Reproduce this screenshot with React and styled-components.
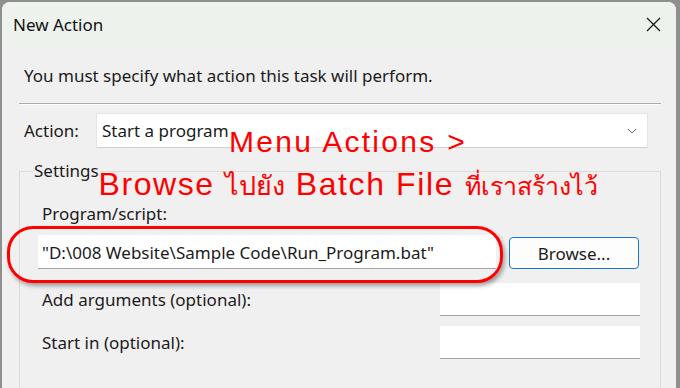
import React from 'react';
import styled, { createGlobalStyle } from 'styled-components';

const GlobalStyle = createGlobalStyle`
  html, body {
    margin: 0;
    background: #8f8f8f;
    overflow: hidden;
  }
`;

const Window = styled.div`
  position: relative;
  margin: 2px 4px 0 2px;
  height: 386px;
  border-radius: 8px 8px 0 0;
  background: #f0f0f0;
  overflow: hidden;
  font-family: 'Noto Sans', 'Open Sans', sans-serif;
  font-size: 17px;
  color: #1b1b1b;
`;

const TitleBar = styled.div`
  height: 44px;
  display: flex;
  align-items: center;
  justify-content: space-between;
  padding: 0 15px 0 11px;
  background: #eef2ec;
`;

const Title = styled.span`
  font-size: 17px;
  color: #111;
`;

const Body = styled.div`
  padding: 20px 15px 0 17px;
`;

const Intro = styled.div`
  line-height: 20px;
  padding-left: 5px;
`;

const Separator = styled.div`
  margin-top: 17px;
  height: 1px;
  background: #a9a9a9;
  border-bottom: 1px solid #fcfcfc;
`;

const ActionRow = styled.div`
  display: flex;
  align-items: center;
  margin-top: 8px;
  padding-right: 13px;
`;

const ActionLabel = styled.span`
  width: 77px;
  padding-left: 5px;
  box-sizing: border-box;
`;

const Combo = styled.div`
  flex: 1;
  height: 33px;
  display: flex;
  align-items: center;
  justify-content: space-between;
  padding: 0 10px 0 5px;
  background: #fff;
  border: 1px solid #e4e4e4;
  border-bottom-color: #cfcfcf;
`;

const Group = styled.fieldset`
  margin: 13px 0 0 0;
  padding: 0 20px 60px 18px;
  border: 1px solid #dcdcdc;
  border-radius: 0;
`;

const Legend = styled.legend`
  margin-left: -5px;
  padding: 0 1px;
  line-height: 20px;
`;

const FieldLabel = styled.div`
  line-height: 20px;
  padding-left: 4px;
  margin-top: ${p => p.$top}px;
`;

const PathRow = styled.div`
  display: flex;
  align-items: center;
  gap: 13px;
  margin-top: 10px;
`;

const TextBox = styled.div`
  box-sizing: border-box;
  height: ${p => p.$h}px;
  width: ${p => p.$w}px;
  display: flex;
  align-items: center;
  padding: 2px 4px 0;
  background: #fff;
  border-bottom: 1px solid #a3a3a3;
  white-space: nowrap;
  overflow: hidden;
`;

const Button = styled.button`
  width: 130px;
  height: 32px;
  margin-top: 3px;
  font: inherit;
  color: #1b1b1b;
  background: #fdfdfd;
  border: 1px solid #1a75cc;
  border-radius: 4px;
`;

const OptionRow = styled.div`
  display: flex;
  align-items: center;
  justify-content: space-between;
  margin-top: ${p => p.$top}px;
  padding-left: 4px;
`;

const Note = styled.div`
  position: absolute;
  left: 0;
  top: 119px;
  width: 692px;
  text-align: center;
  color: #ff0000;
  font-family: 'Liberation Sans', Arial, sans-serif;
  pointer-events: none;
`;

const NoteLine = styled.div`
  font-size: ${p => p.$size}px;
  letter-spacing: ${p => p.$spacing}px;
  line-height: 42px;
  white-space: nowrap;
`;

const ThaiPart = styled.span`
  letter-spacing: 0;
  font-size: ${p => p.$size}px;
`;

const Highlight = styled.div`
  position: absolute;
  left: 5px;
  top: 224px;
  width: 490px;
  height: 51px;
  border: 3px solid #f00;
  border-radius: 26px;
  box-shadow: 2px 3px 4px rgba(0, 0, 0, 0.35);
  pointer-events: none;
`;

const CloseIcon = () => (
  <svg width="15" height="15" viewBox="0 0 15 15">
    <path d="M1 1 L14 14 M14 1 L1 14" stroke="#1a1a1a" strokeWidth="1.3" fill="none" />
  </svg>
);

const Chevron = () => (
  <svg width="10" height="6" viewBox="0 0 10 6">
    <path d="M1 1 L5 5 L9 1" stroke="#6b6b6b" strokeWidth="1" fill="none" />
  </svg>
);

const App = () =>
  <>
    <GlobalStyle />
    <Window>
      <TitleBar>
        <Title>New Action</Title>
        <CloseIcon />
      </TitleBar>
      <Body>
        <Intro>You must specify what action this task will perform.</Intro>
        <Separator />
        <ActionRow>
          <ActionLabel>Action:</ActionLabel>
          <Combo>
            <span>Start a program</span>
            <Chevron />
          </Combo>
        </ActionRow>
        <Group>
          <Legend>Settings</Legend>
          <FieldLabel $top={23}>Program/script:</FieldLabel>
          <PathRow>
            <TextBox $w={458} $h={34}>"D:\008 Website\Sample Code\Run_Program.bat"</TextBox>
            <Button>Browse...</Button>
          </PathRow>
          <OptionRow $top={14}>
            <span>Add arguments (optional):</span>
            <TextBox $w={200} $h={33} />
          </OptionRow>
          <OptionRow $top={10}>
            <span>Start in (optional):</span>
            <TextBox $w={200} $h={33} />
          </OptionRow>
        </Group>
      </Body>
      <Note>
        <NoteLine $size={30} $spacing={2.3}>Menu Actions &gt;</NoteLine>
        <NoteLine $size={32} $spacing={1.6}>
          Browse <ThaiPart $size={27}>ไปยัง</ThaiPart> Batch File <ThaiPart $size={25}>ที่เราสร้างไว้</ThaiPart>
        </NoteLine>
      </Note>
      <Highlight />
    </Window>
  </>;

export default App;
